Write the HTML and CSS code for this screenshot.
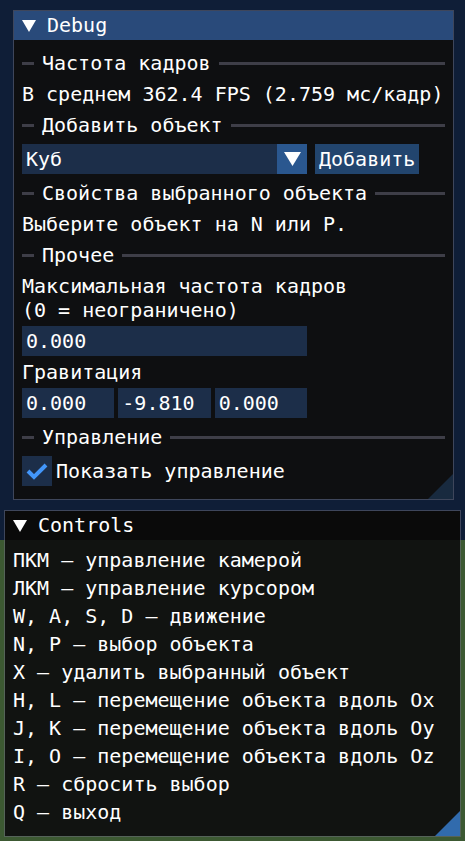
FILE: index.html
```html
<!DOCTYPE html>
<html lang="ru">
<head>
<meta charset="utf-8">
<title>Debug</title>
<link rel="stylesheet" href="styles.css">
</head>
<body>
<div class="win debug">
  <div class="title active">
    <svg class="tri" width="14" height="12" viewBox="0 0 14 12"><polygon points="0,0 14,0 7,12" fill="#fff"/></svg>
    <span>Debug</span>
  </div>
  <div class="body">
    <div class="sep"><span class="dash"></span><span class="sep-label">Частота кадров</span><span class="line"></span></div>
    <div class="text">В среднем 362.4 FPS (2.759 мс/кадр)</div>
    <div class="sep"><span class="dash"></span><span class="sep-label">Добавить объект</span><span class="line"></span></div>
    <div class="frame-row">
      <div class="combo">
        <span class="combo-val">Куб</span>
        <span class="combo-arrow"><svg width="17" height="14" viewBox="0 0 17 14"><polygon points="0,0 17,0 8.5,14" fill="#fff"/></svg></span>
      </div>
      <div class="btn">Добавить</div>
    </div>
    <div class="sep"><span class="dash"></span><span class="sep-label">Свойства выбранного объекта</span><span class="line"></span></div>
    <div class="text">Выберите объект на N или P.</div>
    <div class="sep"><span class="dash"></span><span class="sep-label">Прочее</span><span class="line"></span></div>
    <div class="text">Максимальная частота кадров
(0 = неограничено)</div>
    <div class="input">0.000</div>
    <div class="text">Гравитация</div>
    <div class="vec">
      <div class="input">0.000</div>
      <div class="input">-9.810</div>
      <div class="input">0.000</div>
    </div>
    <div class="sep"><span class="dash"></span><span class="sep-label">Управление</span><span class="line"></span></div>
    <div class="check-row">
      <span class="checkbox"><svg width="30" height="30" viewBox="0 0 30 30"><polyline points="6,15 12,21 24,9" fill="none" stroke="#4296fa" stroke-width="4" stroke-linejoin="miter"/></svg></span>
      <span class="text">Показать управление</span>
    </div>
  </div>
  <div class="grip"></div>
</div>

<div class="win controls">
  <div class="title inactive">
    <svg class="tri" width="14" height="12" viewBox="0 0 14 12"><polygon points="0,0 14,0 7,12" fill="#fff"/></svg>
    <span>Controls</span>
  </div>
  <div class="body">
    <div class="text">ПКМ – управление камерой</div>
    <div class="text">ЛКМ – управление курсором</div>
    <div class="text">W, A, S, D – движение</div>
    <div class="text">N, P – выбор объекта</div>
    <div class="text">X – удалить выбранный объект</div>
    <div class="text">H, L – перемещение объекта вдоль Ox</div>
    <div class="text">J, K – перемещение объекта вдоль Oy</div>
    <div class="text">I, O – перемещение объекта вдоль Oz</div>
    <div class="text">R – сбросить выбор</div>
    <div class="text">Q – выход</div>
  </div>
  <div class="grip hot"></div>
</div>
</body>
</html>
```

FILE: styles.css
```css
html, body {
  margin: 0;
  padding: 0;
}

body {
  width: 465px;
  height: 841px;
  overflow: hidden;
  background: linear-gradient(to bottom, #0f1e37 0, #0f1e37 540px, #3c5932 540px, #3c5932 100%);
  font-family: "DejaVu Sans Mono", "Liberation Mono", monospace;
  font-size: 20px;
  color: #ffffff;
  display: flex;
  flex-direction: column;
  align-items: flex-start;
}

.win {
  position: relative;
  box-sizing: border-box;
  border: 1px solid rgba(110, 110, 128, 0.5);
  background: rgba(15, 15, 15, 0.94);
  background-clip: padding-box;
  display: flex;
  flex-direction: column;
}

.debug {
  margin: 10px 0 0 13px;
  width: 441px;
  height: 490px;
}

.controls {
  margin: 10px 0 0 4px;
  width: 457px;
  height: 327px;
}

.title {
  height: 29px;
  display: flex;
  align-items: center;
  padding-left: 8px;
  gap: 11px;
  line-height: 29px;
}

.title.active {
  background: #294a7a;
}

.title.inactive {
  background: #0a0a0a;
}

.tri {
  display: block;
  flex: none;
}

.body {
  padding: 8px;
  display: flex;
  flex-direction: column;
  gap: 4px;
}

.text {
  line-height: 24px;
  white-space: pre;
}

.sep {
  height: 30px;
  display: flex;
  align-items: center;
  white-space: pre;
}

.sep .dash {
  width: 12px;
  height: 3px;
  margin-right: 8px;
  background: rgba(110, 110, 128, 0.5);
  flex: none;
}

.sep .line {
  flex: 1;
  height: 3px;
  margin-left: 8px;
  background: rgba(110, 110, 128, 0.5);
}

.sep-label {
  line-height: 24px;
}

.frame-row {
  display: flex;
  gap: 8px;
  height: 30px;
}

.combo {
  width: 285px;
  display: flex;
  background: rgba(41, 74, 122, 0.54);
}

.combo-val {
  flex: 1;
  padding-left: 4px;
  line-height: 30px;
}

.combo-arrow {
  width: 30px;
  display: flex;
  align-items: center;
  justify-content: center;
  background: rgba(66, 150, 250, 0.4);
}

.combo-arrow svg {
  display: block;
}

.btn {
  padding: 0 4px;
  line-height: 30px;
  background: rgba(66, 150, 250, 0.4);
}

.input {
  box-sizing: border-box;
  width: 285px;
  height: 30px;
  padding-left: 4px;
  line-height: 30px;
  background: rgba(41, 74, 122, 0.54);
}

.vec {
  display: flex;
  gap: 4px;
  width: 285px;
}

.vec .input {
  flex: 1;
  width: auto;
}

.check-row {
  display: flex;
  align-items: center;
  gap: 4px;
  height: 30px;
}

.checkbox {
  width: 30px;
  height: 30px;
  background: rgba(41, 74, 122, 0.54);
}

.checkbox svg {
  display: block;
}

.grip {
  position: absolute;
  right: 0;
  bottom: 0;
  width: 25px;
  height: 25px;
  clip-path: polygon(100% 0, 100% 100%, 0 100%);
  background: rgba(66, 150, 250, 0.2);
}

.grip.hot {
  background: rgba(66, 150, 250, 0.67);
}
```
